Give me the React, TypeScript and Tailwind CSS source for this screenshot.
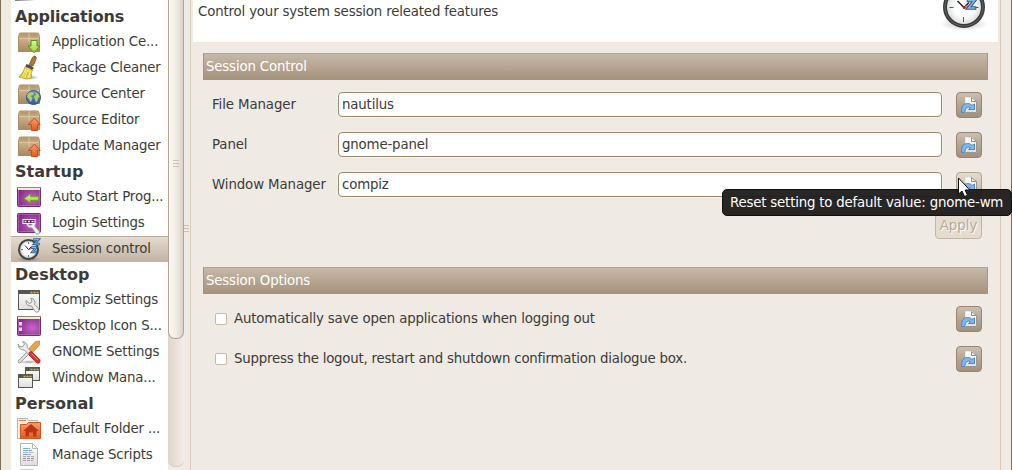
import React from "react";

function Defs() {
  return (
    <svg className="absolute h-0 w-0" aria-hidden="true">
      <defs>
        <linearGradient id="box" x1="0" y1="0" x2="0" y2="1">
          <stop offset="0" stopColor="#cfb289" />
          <stop offset="0.3" stopColor="#cdb089" />
          <stop offset="1" stopColor="#a98b63" />
        </linearGradient>
        <linearGradient id="boxTop" x1="0" y1="0" x2="0" y2="1">
          <stop offset="0" stopColor="#b3956b" />
          <stop offset="1" stopColor="#c6a87f" />
        </linearGradient>
        <radialGradient id="purple" cx="0.65" cy="0.6" r="0.7">
          <stop offset="0" stopColor="#c765c4" />
          <stop offset="1" stopColor="#84278a" />
        </radialGradient>
        <linearGradient id="green" x1="0" y1="0" x2="0" y2="1">
          <stop offset="0" stopColor="#e2f49a" />
          <stop offset="1" stopColor="#93d335" />
        </linearGradient>
        <linearGradient id="orange" x1="0" y1="0" x2="0" y2="1">
          <stop offset="0" stopColor="#f8a06a" />
          <stop offset="1" stopColor="#e2581f" />
        </linearGradient>
        <linearGradient id="globe" x1="0" y1="0" x2="0" y2="1">
          <stop offset="0" stopColor="#6f9bd6" />
          <stop offset="1" stopColor="#2c5aa8" />
        </linearGradient>
        <linearGradient id="paper" x1="0" y1="0" x2="0" y2="1">
          <stop offset="0" stopColor="#ffffff" />
          <stop offset="1" stopColor="#dededc" />
        </linearGradient>
        <radialGradient id="dial">
          <stop offset="0.5" stopColor="#ffffff" />
          <stop offset="1" stopColor="#d6d6d4" />
        </radialGradient>
        <radialGradient id="shadow">
          <stop offset="0" stopColor="#000" stopOpacity="0.35" />
          <stop offset="1" stopColor="#000" stopOpacity="0" />
        </radialGradient>
      </defs>
    </svg>
  );
}

function Svg({ children }: { children: React.ReactNode }) {
  return (
    <svg viewBox="0 0 24 24" className="block h-6 w-6 shrink-0 overflow-visible">
      {children}
    </svg>
  );
}

function Box() {
  return (
    <>
      <path d="M3.500 3h17q1 0 1.300 1l.7 4v13h-21V8l.7-4q.3-1 1.300-1z" fill="url(#box)" stroke="#ab8d64" />
      <path d="M3.500 3.500h17l1 4.500h-19z" fill="url(#boxTop)" />
      <path d="M2 8.500h20" stroke="#dcc4a0" />
      <path d="M12 3.500v9" stroke="#e2cba8" strokeWidth="1.500" opacity="0.6" />
      <path d="M1 21.500h22" stroke="#8f7450" strokeWidth=".7" />
    </>
  );
}

function BoxDownIcon() {
  return (
    <Svg>
      <Box />
      <path d="M14 10.500h6v5.500h3L17 22.800 11 16h3z" fill="url(#green)" stroke="#559414" />
    </Svg>
  );
}

function BoxUpIcon() {
  return (
    <Svg>
      <Box />
      <path d="M14.500 22.500h6v-6h2.700L17.500 10l-6.200 6.500h3.200z" fill="url(#orange)" stroke="#c94b1c" />
    </Svg>
  );
}

function BoxGlobeIcon() {
  return (
    <Svg>
      <Box />
      <circle cx="16.500" cy="15.500" r="7" fill="url(#globe)" stroke="#25529a" />
      <path d="M10.500 12l2.500-1.800 3.500.3.500 1.500-2 1.500-1.500.5 2 1.500-.8 3-1.500 1.500-1.200-3-2-2z" fill="#b9cd4a" />
      <path d="M18 10.200l3 1.300 1.500 3-1.500 1.500-.5 3-1.500 1.500-1.200-3.500-1-1.500 1-2 1.500-.8z" fill="#b9cd4a" />
    </Svg>
  );
}

function BroomIcon() {
  return (
    <Svg>
      <ellipse cx="13" cy="21.500" rx="9" ry="2.500" fill="url(#shadow)" />
      <path d="M12.500 8.500l2.500-6q1-2.500 3-2.500 2 1 1 3L16 10z" fill="#b9762f" stroke="#8a5a22" />
      <path d="M8.500 10q4 1 7 4-2 3-1 8l-5 1-7.500-2q5-5 6.500-11z" fill="#e6d445" stroke="#b39c24" strokeWidth=".8" />
      <path d="M9 13l-4 7M11 14l-3 8M13.500 15l-2 7" stroke="#fff398" />
      <path d="M7 15l-3 5M11 16l-2 6" stroke="#ad9515" strokeWidth=".6" />
      <path d="M9 9.500q4 .7 7 3.500" stroke="#4a4e58" strokeWidth="3" fill="none" />
    </Svg>
  );
}

function PurpleScreen({ children }: { children: React.ReactNode }) {
  return (
    <Svg>
      <rect x=".5" y="2.500" width="23" height="19" rx="1" fill="url(#purple)" stroke="#70306e" />
      <rect x="1.500" y="3.500" width="21" height="17" fill="none" stroke="#c77dc5" strokeOpacity=".55" />
      {children}
    </Svg>
  );
}

function TopPanel() {
  return (
    <>
      <path d="M0 2.500h24" stroke="#8c8b72" strokeWidth="1" />
      <path d="M1 4h22" stroke="#efeed4" strokeWidth="2" />
    </>
  );
}

function AutoStartIcon() {
  return (
    <PurpleScreen>
      <TopPanel />
      <path d="M7 13.500l6.500-4.500v2.700h8v3.600h-8V18z" fill="url(#green)" stroke="#6aa51c" />
    </PurpleScreen>
  );
}

function Wrench() {
  return (
    <path
      d="M9.500 10.500q-.5 5.500 5.500 5.500l3.500 5.300q1.200 1.500 3.300.6 1.400-1.400.3-3.100L18 14.500q1.500-5-3.500-6.500l-.3.300 1.300 3-1 1.700-2 .2z"
      fill="#eeeeec"
      stroke="#8c8e89"
      strokeWidth=".9"
    />
  );
}

function LoginIcon() {
  return (
    <PurpleScreen>
      <g transform="translate(0 1)"><Wrench /></g>
      <rect x="6" y="8.500" width="12" height="4" fill="#55204f" stroke="#fff" />
      <path d="M7.500 10.500h2M11 10.500h2M14.500 10.500h2" stroke="#fff" strokeWidth="1.600" />
    </PurpleScreen>
  );
}

function DesktopIcon() {
  return (
    <PurpleScreen>
      <TopPanel />
      <path d="M2 8h3v3.500H2zM2 13.500h3V17H2z" fill="#f0dcf0" />
    </PurpleScreen>
  );
}

function ClockIcon() {
  return (
    <Svg>
      <ellipse cx="12" cy="22.200" rx="12" ry="2.400" fill="url(#shadow)" />
      <circle cx="11.500" cy="12.500" r="9.500" fill="url(#dial)" stroke="#3e4141" strokeWidth="2" />
      <circle cx="11.500" cy="12.500" r="8.300" fill="none" stroke="#a1a3a1" strokeWidth=".5" />
      <path d="M11.500 5v2M11.500 18v2M4 12.500h2M17 12.500h2" stroke="#555" strokeWidth=".8" />
      <path d="M8 8.500l3.500 4 3-3" stroke="#222" fill="none" />
      <path d="M11.500 12.500l5-1.500" stroke="#e33" />
      <g fill="none" strokeLinecap="square">
        <path d="M17.500 2.500h4l-4 4.500h4M15.500 10.500h3.500l-3.500 4.500H19" stroke="#2d5e93" strokeWidth="2.600" />
        <path d="M17.500 2.500h4l-4 4.500h4M15.500 10.500h3.500l-3.500 4.500H19" stroke="#83b4df" strokeWidth="1" />
      </g>
    </Svg>
  );
}

function HeaderClock() {
  return (
    <svg viewBox="0 0 48 48" className="block h-12 w-12 overflow-visible">
      <ellipse cx="24" cy="42" rx="24" ry="7" fill="url(#shadow)" opacity=".7" />
      <circle cx="24" cy="25" r="19" fill="url(#dial)" stroke="#393c3c" strokeWidth="4" />
      <circle cx="24" cy="25" r="19" fill="none" stroke="#636565" strokeWidth="1" />
      <path d="M23.500 35v5M9.500 25.500h4M34.500 25.500h4" stroke="#555" />
      <path d="M17.500 19l6.500 6.500 5-5" stroke="#222" strokeWidth="1.500" fill="none" />
      <path d="M24 25.500l9-3" stroke="#ef7777" strokeWidth="2" />
      <circle cx="24.200" cy="25.500" r="1.500" fill="#c91717" />
      <g fill="none" strokeLinecap="square">
        <path d="M28.500 18.500h6l-6 7.500h6" stroke="#2d5e93" strokeWidth="3.600" />
        <path d="M28.500 18.500h6l-6 7.500h6" stroke="#83b4df" strokeWidth="1.500" />
      </g>
    </svg>
  );
}

function WindowFrame({ x, y, w, h }: { x: number; y: number; w: number; h: number }) {
  return (
    <>
      <rect x={x} y={y} width={w} height={h} fill="url(#paper)" stroke="#555753" />
      <rect x={x} y={y} width={w} height="3.500" fill="#555753" />
      <path d={`M${x + w - 9} ${y + 2}h8`} stroke="#dcae55" strokeWidth="1.600" strokeDasharray="2 1" />
    </>
  );
}

function CompizIcon() {
  return (
    <Svg>
      <WindowFrame x={1.5} y={2.5} w={21} h={19} />
      <g transform="translate(-.5 2)"><Wrench /></g>
    </Svg>
  );
}

function WindowsIcon() {
  return (
    <Svg>
      <WindowFrame x={8.5} y={1.5} w={14} h={13} />
      <WindowFrame x={1.5} y={8.5} w={14} h={13} />
    </Svg>
  );
}

function ToolsIcon() {
  return (
    <Svg>
      <ellipse cx="12" cy="22" rx="11" ry="2" fill="url(#shadow)" />
      <path d="M2.500 21.500L14 10" stroke="#8c8e89" strokeWidth="3.400" strokeLinecap="round" />
      <path d="M2.500 21.500L14 10" stroke="#e9e9e7" strokeWidth="1.800" strokeLinecap="round" />
      <path d="M12 8.500l6.500-7 4-.5v4l-7 7.500z" fill="#e9a34b" stroke="#c98735" strokeWidth=".8" />
      <path d="M5.500 1.500l2 2.500-1.500 2.500-3.500.3L1.300 4q-.5 6 6 6l5 5 2.500-2.500-4.500-5q.5-5-4.800-6z" fill="#ecece9" stroke="#8f918c" strokeWidth=".9" />
      <path d="M14 14l7 7" stroke="#a81d1a" strokeWidth="5" strokeLinecap="round" />
      <path d="M14 14l7 7" stroke="#d93530" strokeWidth="3.600" strokeLinecap="round" />
      <path d="M14.500 13.500l6.500 6.500" stroke="#f27a70" strokeWidth="1" />
    </Svg>
  );
}

function HomeFolderIcon() {
  return (
    <Svg>
      <path d="M.5 21.500v-20h10l1 2h9v18z" fill="#f0efed" stroke="#b7b7b4" />
      <path d="M2 3.500h7" stroke="#eb8248" />
      <path d="M3.500 21.500v-14h6l2-2h12v16z" fill="url(#orange)" stroke="#d4561f" />
      <path d="M6 14l8-7 8 7h-2.500v5.500h-3.500v-4h-4v4H8.500V14z" fill="#bd3414" />
    </Svg>
  );
}

function ScriptIcon() {
  const rows = [
    { y: 5.5, w: 7, color: "#80a9c9", dash: "5 .5" },
    { y: 7.5, w: 9, color: "#6caeca", dash: "5 .5" },
    { y: 9.5, w: 11, color: "#a4bdd1", dash: "5 .5" },
    { y: 11.5, w: 8, color: "#7fa5c5", dash: "5 .5" },
    { y: 13.5, w: 11, color: "#c49ac0", dash: "3 1" },
    { y: 15.5, w: 12, color: "#72aa78", dash: "3 1" },
    { y: 17.5, w: 10, color: "#c286b7", dash: "3 1" },
  ];
  return (
    <Svg>
      <path d="M3.500.5h12l5 5v17h-17z" fill="url(#paper)" stroke="#b5b7b3" />
      <path d="M15.500.5v5h5z" fill="#fff" stroke="#b5b7b3" />
      {rows.map((row) => (
        <path key={row.y} d={`M6 ${row.y}h${row.w}`} stroke={row.color} strokeDasharray={row.dash} />
      ))}
    </Svg>
  );
}

function RevertIcon() {
  return (
    <svg viewBox="0 0 16 16" className="block h-4 w-4">
      <path d="M4.500.5h7l4 4v11h-11z" fill="url(#paper)" stroke="#e8e8e6" />
      <path d="M15.500 4.500v11h-11" fill="none" stroke="#969792" />
      <path d="M10.500.5v4h5z" fill="#fff" stroke="#8c8e89" />
      <path d="M.5 15.500Q0 6.500 6.500 6.500q3 0 4.500 2l2.500-1.500v5.500H7.500l2-2Q4.500 8.500 3.800 15.500z" fill="#83b6e5" stroke="#4a8bcb" />
    </svg>
  );
}

const groups = [
  {
    title: "Applications",
    tight: true,
    items: [
      { label: "Application Ce...", icon: <BoxDownIcon /> },
      { label: "Package Cleaner", icon: <BroomIcon /> },
      { label: "Source Center", icon: <BoxGlobeIcon /> },
      { label: "Source Editor", icon: <BoxUpIcon /> },
      { label: "Update Manager", icon: <BoxUpIcon /> },
    ],
  },
  {
    title: "Startup",
    items: [
      { label: "Auto Start Prog...", icon: <AutoStartIcon /> },
      { label: "Login Settings", icon: <LoginIcon /> },
      { label: "Session control", icon: <ClockIcon />, selected: true },
    ],
  },
  {
    title: "Desktop",
    items: [
      { label: "Compiz Settings", icon: <CompizIcon /> },
      { label: "Desktop Icon S...", icon: <DesktopIcon /> },
      { label: "GNOME Settings", icon: <ToolsIcon /> },
      { label: "Window Mana...", icon: <WindowsIcon /> },
    ],
  },
  {
    title: "Personal",
    items: [
      { label: "Default Folder ...", icon: <HomeFolderIcon /> },
      { label: "Manage Scripts", icon: <ScriptIcon /> },
    ],
  },
];

function Sidebar() {
  return (
    <nav className="w-[157px] shrink-0 overflow-hidden bg-white">
      <div className="h-1 pl-1">
        <div className="h-px w-5 bg-linear-to-r from-[#777] to-white" />
      </div>
      {groups.map((group) => (
        <section key={group.title}>
          <h2
            className={
              "tight" in group
                ? "h-[25px] pl-1 text-[16px] leading-[25px] font-bold tracking-[-0.21px]"
                : "h-[25px] pl-1 text-[16px] leading-[25px] font-bold tracking-normal"
            }
          >
            {group.title}
          </h2>
          {group.items.map((item) => (
            <div
              key={item.label}
              className={
                "selected" in item
                  ? "flex h-[26px] items-center bg-linear-to-b from-[#e5ddd3] to-[#c2b3a1] pl-1.5 shadow-[inset_0_1px_0_#b9ab99]"
                  : "flex h-[26px] items-center pl-1.5"
              }
            >
              {item.icon}
              <span className="ml-[11px] whitespace-nowrap">{item.label}</span>
            </div>
          ))}
        </section>
      ))}
      <div className="mt-px ml-[9px] h-2 w-[13px] bg-[#e9c9b5]" />
    </nav>
  );
}

function Grip() {
  return (
    <div className="flex flex-col gap-[2px]">
      <i className="block h-px bg-[#cabfb0]" />
      <i className="block h-px bg-[#cabfb0]" />
      <i className="block h-px bg-[#cabfb0]" />
    </div>
  );
}

function Scrollbar() {
  return (
    <div className="h-[467px] w-4 shrink-0 rounded-b-[7px] border-b border-[#d2c8ba] bg-linear-to-r from-[#ded5c9] to-[#f2ede7]">
      <div className="h-[339px] rounded-b-[7px] border-x border-b border-[#b3a48f] bg-linear-to-r from-[#faf8f5] via-[#f1ece5] to-[#ddd3c6] px-1 pt-[160px]">
        <Grip />
      </div>
    </div>
  );
}

function ResetButton({ hover = false }: { hover?: boolean }) {
  return (
    <button
      className={
        hover
          ? "flex h-[26px] w-[26px] items-center justify-center rounded-[4px] border border-[#b1a28e] bg-linear-to-b from-[#e4dbd0] to-[#c2b4a2]"
          : "flex h-[26px] w-[26px] items-center justify-center rounded-[4px] border border-[#968571] bg-linear-to-b from-[#cbbfaf] via-[#b5a591] to-[#a39079]"
      }
      aria-label="Reset"
    >
      <RevertIcon />
    </button>
  );
}

function SectionTitle({ children }: { children: React.ReactNode }) {
  return (
    <h3 className="h-[27px] border border-[#a5947e] border-t-[#b4a592] bg-linear-to-b from-[#c6b9a8] to-[#a6937d] pl-[2px] leading-[25px] text-white">
      {children}
    </h3>
  );
}

function Field({ label, value, hover }: { label: string; value: string; hover?: boolean }) {
  return (
    <div className="flex h-[26px] items-start pr-1.5 pl-[9px]">
      <label className="w-[126px] shrink-0 leading-[25px] tracking-[-0.1px] whitespace-nowrap">{label}</label>
      <div className="mr-[14px] h-[25px] flex-1 rounded-[4px] border border-[#9c8a6e] bg-white pl-[3px] leading-[23px] shadow-[0_0_0_1px_#f5f1e9]">
        {value}
      </div>
      <ResetButton hover={hover} />
    </div>
  );
}

function Option({ label, tight }: { label: string; tight?: boolean }) {
  return (
    <div className="flex h-[26px] items-center pr-1.5 pl-3">
      <span className="h-3 w-3 rounded-[2px] border border-[#c4b8a6] bg-white" />
      <span className={tight ? "ml-[7px] flex-1 tracking-[-0.215px]" : "ml-[7px] flex-1"}>{label}</span>
      <ResetButton />
    </div>
  );
}

export default function App() {
  return (
    <div className="relative flex h-[470px] w-[1012px] overflow-hidden bg-[#efeae3] font-['DejaVu_Sans',sans-serif] text-[13.33px] leading-[16px] tracking-[-0.16px] text-[#3c3b37]">
      <Defs />
      <div className="w-px shrink-0 bg-[#7d6c59]" />
      <div className="w-[10px] shrink-0" />
      <Sidebar />
      <Scrollbar />
      <div className="w-[5px] shrink-0 pt-[225px]">
        <Grip />
      </div>
      <main className="ml-px flex w-[811px] shrink-0 flex-col border-x border-[#d7cab7] px-px">
        <header className="mx-px flex h-[43px] shrink-0 items-start justify-between border-b border-[#efe5d6] bg-white pr-[10px] pl-[5px]">
          <p className="pt-1">Control your system session releated features</p>
          <div className="-mt-[18px] h-12">
            <HeaderClock />
          </div>
        </header>
        <div className="px-[11px] pt-[10px]">
          <SectionTitle>Session Control</SectionTitle>
          <div className="flex flex-col gap-[14px] pt-3">
            <Field label="File Manager" value="nautilus" />
            <Field label="Panel" value="gnome-panel" />
            <Field label="Window Manager" value="compiz" hover />
          </div>
          <div className="flex justify-end pt-[15px] pr-1.5">
            <button className="h-[26px] w-[47px] rounded-[4px] border border-[#c1b5a5] bg-[#e4dccf] tracking-normal text-[#b7a993] [text-shadow:1px_1px_0_#fff]">
              Apply
            </button>
          </div>
          <div className="pt-7">
            <SectionTitle>Session Options</SectionTitle>
          </div>
          <div className="flex flex-col gap-[14px] pt-3">
            <Option label="Automatically save open applications when logging out" />
            <Option label="Suppress the logout, restart and shutdown confirmation dialogue box." tight />
          </div>
        </div>
      </main>
      <div className="flex-1" />
      <div className="w-px shrink-0 bg-[#7d6c59]" />
      <div className="absolute top-[189px] left-[722px] h-[27px] w-[290px] rounded-[5px] border border-[#111] bg-[#1c1b1a]/95 pl-[7px] leading-[25px] tracking-[-0.19px] whitespace-nowrap text-white">
        Reset setting to default value: gnome-wm
      </div>
      <svg viewBox="0 0 12 20" className="absolute top-[178px] left-[958px] h-5 w-3 overflow-visible">
        <path d="M.5 0v16l3.500-3 2.500 5.500 3-1.300L7 12h4.700z" fill="#fff" stroke="#111" />
      </svg>
    </div>
  );
}
